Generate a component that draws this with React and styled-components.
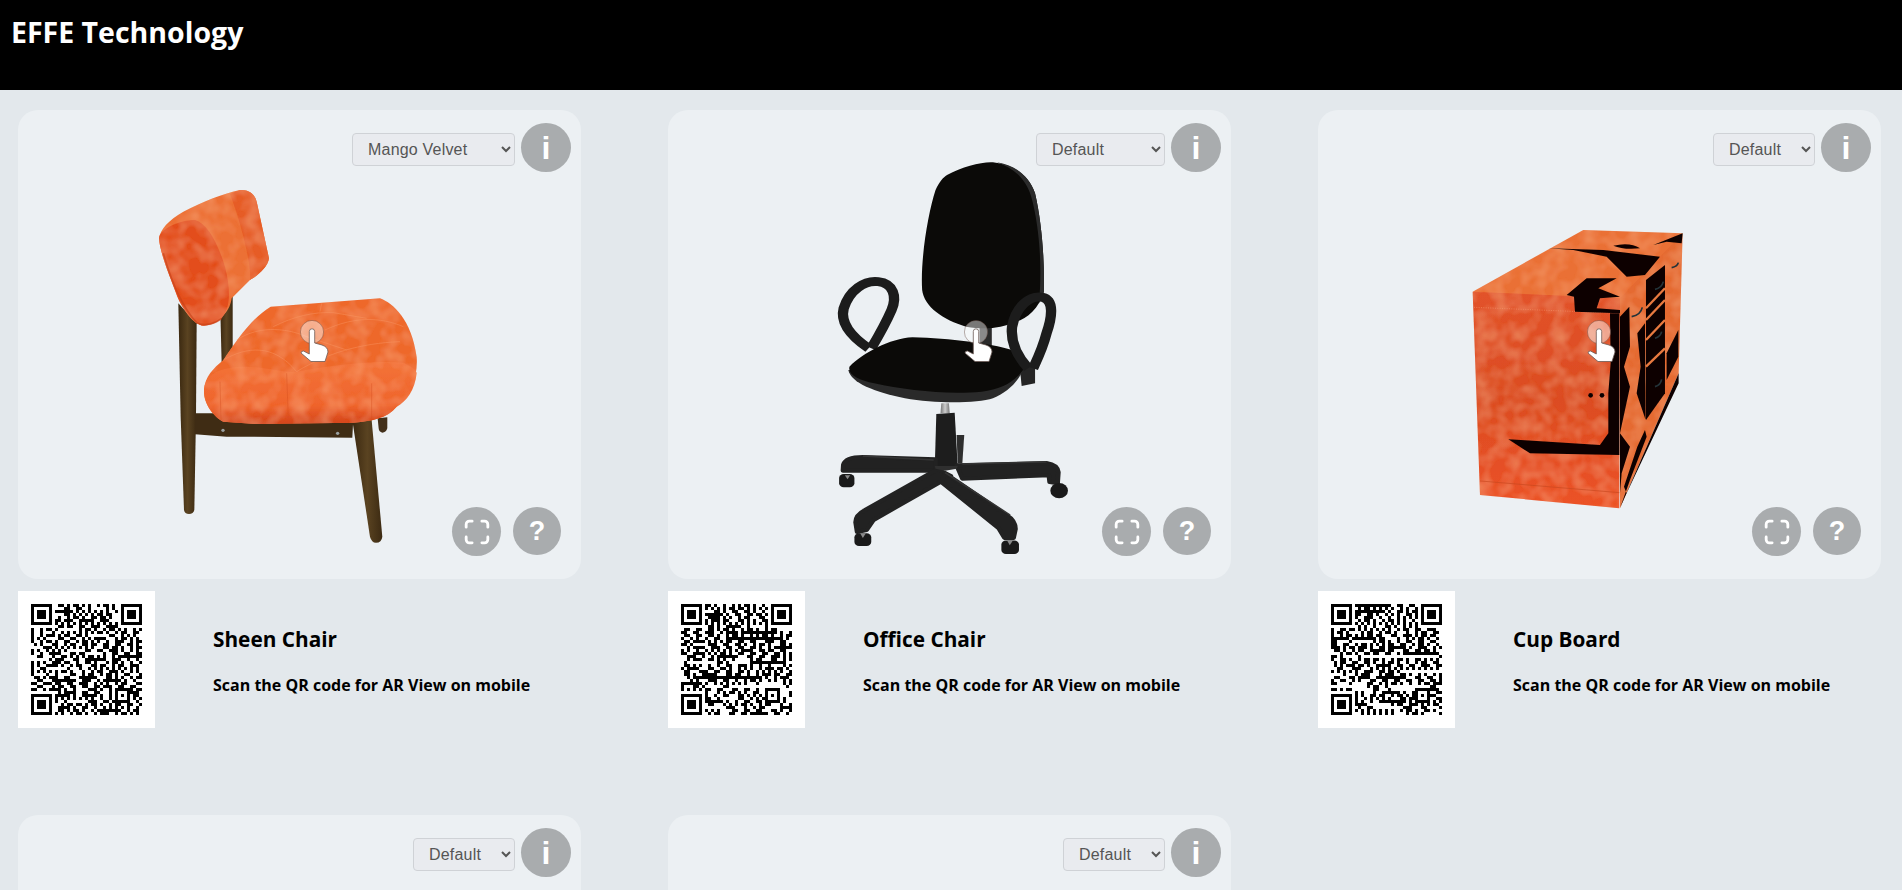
import styled, { createGlobalStyle } from 'styled-components'

const Cores = {
  preto: '#000',
  fundo: '#e3e8ec',
  card: '#ecf0f3',
  cinza: '#a9acae',
  borda: '#cfd2d6',
  select: '#e9ebef',
  texto: '#555',
}

const Global = createGlobalStyle`
  html, body { margin: 0; padding: 0; }
  body { background: ${Cores.fundo}; font-family: "Open Sans", "Noto Sans", sans-serif; }
`

const Page = styled.div`
  height: 100vh;
  overflow: hidden;
`
const Header = styled.header`
  height: 90px;
  box-sizing: border-box;
  padding: 13px 11px;
  background: ${Cores.preto};
`
const Logo = styled.h1`
  margin: 0;
  color: #fff;
  font-size: 28.5px;
  line-height: 38px;
  font-weight: 700;
`
const Grid = styled.main`
  display: grid;
  grid-template-columns: repeat(3, 563px);
  gap: 87px;
  padding: 20px 18px;
`
const Card = styled.div`
  position: relative;
  height: 469px;
  background: ${Cores.card};
  border-radius: 20px;
  overflow: hidden;
`
const Canvas = styled.svg`
  display: block;
  width: 100%;
  height: 100%;
`
const TopControls = styled.div`
  position: absolute;
  top: 13px;
  right: 10px;
  display: flex;
  align-items: flex-start;
  gap: 6px;
`
const Variant = styled.select`
  width: ${(p) => p.$width}px;
  height: 33px;
  margin-top: 10px;
  padding: 0 4px 0 11px;
  border: 1px solid ${Cores.borda};
  border-radius: 4px;
  background-color: ${Cores.select};
  color: ${Cores.texto};
  font-family: "Liberation Sans", Arial, sans-serif;
  font-size: 16px;
  letter-spacing: 0.2px;
`
const RoundButton = styled.button`
  display: flex;
  align-items: center;
  justify-content: center;
  flex: none;
  width: ${(p) => p.$size}px;
  height: ${(p) => p.$high || p.$size}px;
  padding: 0;
  border: none;
  border-radius: 50%;
  background: ${Cores.cinza};
  color: #fff;
  font-family: "Liberation Sans", Arial, sans-serif;
  font-weight: 700;
  font-size: ${(p) => p.$font}px;
  line-height: 1;
`
const BottomControls = styled.div`
  position: absolute;
  right: 20px;
  bottom: 23px;
  display: flex;
  align-items: flex-start;
  gap: 12px;
`
const Hint = styled.svg`
  position: absolute;
  top: 210px;
  left: ${(p) => p.$left}px;
  width: 29px;
  height: 42px;
`
const Info = styled.div`
  display: flex;
  align-items: center;
  margin-top: 12px;
  gap: 58px;
`
const QrBox = styled.div`
  flex: none;
  width: 137px;
  height: 137px;
  box-sizing: border-box;
  padding: 13px;
  background: #fff;
`
const QrSvg = styled.svg`
  display: block;
  width: 111px;
  height: 111px;
`
const Titulo = styled.h3`
  margin: 0 0 20px;
  color: #000;
  font-size: 20.8px;
  line-height: 30px;
  font-weight: 700;
`
const Descricao = styled.p`
  margin: 0;
  color: #000;
  font-size: 16px;
  line-height: 22px;
  font-weight: 700;
`

// fake qr, only the look of it matters
const qrPath = (seed) => {
  const n = 37
  let s = seed
  const next = () => {
    s = (s * 1103515245 + 12345) & 0x7fffffff
    return (s >> 12) & 1
  }
  const inFinder = (x, y) =>
    (x < 8 && y < 8) || (x >= n - 8 && y < 8) || (x < 8 && y >= n - 8)
  const inAlign = (x, y) => x >= 28 && x <= 32 && y >= 28 && y <= 32
  let d = ''
  for (let y = 0; y < n; y++) {
    for (let x = 0; x < n; x++) {
      const bit = next()
      if (inFinder(x, y) || inAlign(x, y)) continue
      const on = y === 6 || x === 6 ? (x + y) % 2 === 0 : bit
      if (on) d += `M${x} ${y}h1v1h-1z`
    }
  }
  const ring = (x, y, size) =>
    `M${x} ${y}h${size}v${size}h-${size}zM${x + 1} ${y + 1}v${size - 2}h${size - 2}v-${size - 2}z`
  const eye = (x, y) => ring(x, y, 7) + `M${x + 2} ${y + 2}h3v3h-3z`
  d += eye(0, 0) + eye(n - 7, 0) + eye(0, n - 7)
  d += ring(28, 28, 5) + 'M30 30h1v1h-1z'
  return d
}

const Qr = ({ seed }) => (
  <QrBox>
    <QrSvg viewBox="0 0 37 37">
      <path d={qrPath(seed)} fill="#000" fillRule="evenodd" />
    </QrSvg>
  </QrBox>
)

const Defs = () => (
  <defs>
    <filter id="velvet" x="-5%" y="-5%" width="110%" height="110%">
      <feTurbulence type="fractalNoise" baseFrequency="0.022" numOctaves="2" seed="4" />
      <feColorMatrix values="0 0 0 0 1  0 0 0 0 0.52  0 0 0 0 0.26  0 0 0 0.55 -0.2" />
      <feComposite in2="SourceAlpha" operator="in" result="n" />
      <feMerge>
        <feMergeNode in="SourceGraphic" />
        <feMergeNode in="n" />
      </feMerge>
    </filter>
    <filter id="soft" x="-5%" y="-5%" width="110%" height="110%">
      <feGaussianBlur stdDeviation="2.2" />
    </filter>
    <linearGradient id="bolster" x1="0" y1="0" x2="0" y2="1">
      <stop offset="0" stopColor="#f37238" />
      <stop offset="0.7" stopColor="#ef642c" />
      <stop offset="1" stopColor="#d4431a" />
    </linearGradient>
    <linearGradient id="wood" x1="0" y1="0" x2="1" y2="0">
      <stop offset="0" stopColor="#3a2810" />
      <stop offset="0.5" stopColor="#5a4321" />
      <stop offset="1" stopColor="#3c2a12" />
    </linearGradient>
    <linearGradient id="front" x1="0" y1="0" x2="0" y2="1">
      <stop offset="0" stopColor="#e2522a" />
      <stop offset="0.5" stopColor="#dc4c22" />
      <stop offset="1" stopColor="#ec5228" />
    </linearGradient>
    <linearGradient id="chrome" x1="0" y1="0" x2="1" y2="0">
      <stop offset="0" stopColor="#777" />
      <stop offset="0.5" stopColor="#ccc" />
      <stop offset="1" stopColor="#777" />
    </linearGradient>
  </defs>
)

const SheenChair = () => (
  <g transform="translate(122 60) scale(0.3333)">
    <path d="M713 745L742 742L742 775Q738 788 727 788Q717 786 716 775Z" fill="#43301a" />
    <path d="M240 380L278 380L278 530L245 580Z" fill="url(#wood)" />
    <path d="M115 400L170 460L168 740L163 1020Q160 1032 147 1032Q134 1032 132 1020L122 740Z" fill="url(#wood)" />
    <path d="M165 730L230 730L300 740L640 745L637 803L260 800L165 793Z" fill="#3f2c14" />
    <circle cx="249" cy="781" r="5" fill="#9aa0a0" />
    <circle cx="593" cy="790" r="5" fill="#9aa0a0" />
    <path d="M637 750L695 750L727 1100Q725 1118 708 1118Q695 1118 690 1100Z" fill="url(#wood)" />
    <g filter="url(#velvet)">
      <path d="M57 205C60 180 85 150 130 125C190 95 250 70 300 60C330 58 345 75 350 95L387 265C385 290 350 320 330 330L275 385C270 420 250 450 190 467C160 465 130 420 115 385C90 320 60 250 57 205Z" fill="#ec7034" />
      <path d="M270 72L300 60C330 58 345 75 350 95L387 265C385 290 350 320 330 330C335 280 300 150 270 72Z" fill="#e65c27" />
      <path d="M57 205C60 175 120 150 165 150C200 160 230 210 255 290C275 370 270 420 240 450C220 465 195 468 185 467C150 450 125 410 112 380C90 320 60 250 57 205Z" fill="#e34d1f" />
      <path d="M392 410L720 385C760 400 815 450 830 560C835 620 810 680 770 710C740 745 700 752 640 758L350 762L250 755C220 740 190 700 192 660C195 620 220 595 250 570C290 510 340 440 392 410Z" fill="#ee672c" />
      <path d="M192 660C195 620 225 595 300 590C380 590 430 610 470 605C560 590 680 570 790 578C815 590 830 600 830 610C825 660 800 695 770 710C740 745 700 752 640 758L350 762L250 755C220 740 190 700 192 660Z" fill="url(#bolster)" />
    </g>
    <path d="M70 250C90 320 125 410 170 458C195 470 225 462 245 445" fill="none" stroke="#c53f16" strokeWidth="5" opacity="0.6" />
    <g fill="none" stroke="#f99a6a" strokeWidth="1.6" opacity="0.75">
      <path d="M250 570C320 530 400 520 470 605" />
      <path d="M290 510C350 470 430 470 500 500L620 540" />
      <path d="M400 470C460 440 520 425 580 428L680 445" />
      <path d="M470 605C560 550 660 520 780 515" />
      <path d="M545 400L540 425M555 480C640 440 720 440 790 470" />
      <path d="M440 610L445 745M695 640L695 750M240 635L243 750" stroke="#d34d1e" />
    </g>
  </g>
)

const OfficeChair = () => (
  <g transform="translate(-8 -10) scale(0.3827 0.3333)">
    <rect x="835" y="670" width="32" height="70" fill="#2a2a2a" />
    <path d="M750 225C790 200 840 185 870 187C930 195 965 230 980 280C998 370 1005 480 1003 575C990 625 960 655 930 665C890 685 850 690 800 680C740 660 690 620 685 570C680 480 700 340 720 270C730 245 740 232 750 225Z" fill="#0b0a08" />
    <path d="M880 187C930 195 965 230 980 280C998 370 1005 480 1003 575C1000 590 995 600 990 610C1000 500 990 370 970 290C955 235 925 205 880 187Z" fill="#2b2b2b" />
    <path d="M545 745C500 710 470 670 480 625C495 570 535 540 570 545C610 550 620 590 605 630C590 670 570 710 552 745" fill="none" stroke="#1c1c1c" strokeWidth="27" />
    <path d="M940 800L980 795L980 850L945 858Z" fill="#242424" />
    <path d="M492 810C500 850 560 875 640 895C720 912 830 910 870 895C910 875 940 840 950 805Z" fill="#2a2a2a" />
    <path d="M495 800C530 760 600 715 660 712C760 715 860 730 920 750C955 770 965 790 945 815C920 850 890 868 840 875C750 885 640 870 560 850C520 840 490 825 495 800Z" fill="#0b0a08" />
    <path d="M962 805C935 770 915 730 920 680C930 620 965 585 1000 592C1030 600 1025 650 1010 700C1000 745 985 780 975 805" fill="none" stroke="#1c1c1c" strokeWidth="27" />
    <path d="M735 910L755 910L757 940L733 940Z" fill="url(#chrome)" />
    <path d="M775 1005L795 1005L790 1090L778 1090Z" fill="#2e2e2e" />
    <path d="M722 942L770 938L778 1100L718 1100Z" fill="#1d1d1d" />
    <g fill="#222" stroke="#222" strokeWidth="12" strokeLinejoin="round">
      <path d="M720 1078L530 1071Q485 1071 479 1094L478 1112L505 1112L720 1112Z" />
      <path d="M775 1096L1010 1089Q1039 1094 1041 1117L1039 1150L1018 1146L1016 1126L790 1136Z" />
      <path d="M725 1108L536 1230Q511 1245 511 1267L515 1296L540 1290L558 1260L760 1128Z" />
      <path d="M745 1120L905 1245Q929 1262 929 1287L924 1314L900 1314L885 1285L735 1146Z" />
    </g>
    <path d="M718 1098L778 1098L775 1106L745 1112L720 1106Z" fill="#2f2f2f" />
    <g fill="none" stroke="#353535" strokeWidth="4">
      <path d="M530 1068L715 1080" />
      <path d="M790 1092L1010 1086" />
      <path d="M915 1245L745 1118" />
    </g>
    <g fill="#1a1a1a">
      <rect x="468" y="1122" width="40" height="40" rx="12" />
      <circle cx="1043" cy="1172" r="23" />
      <rect x="508" y="1300" width="44" height="38" rx="12" />
      <rect x="892" y="1322" width="46" height="40" rx="12" />
    </g>
    <g fill="#8a8a8a">
      <path d="M483 1126L497 1126L490 1138Z" />
      <path d="M523 1300L538 1300L530 1314Z" />
      <path d="M907 1322L922 1322L914 1336Z" />
    </g>
  </g>
)

const CupBoard = () => (
  <g transform="translate(82 -10) scale(0.3333)">
    <g filter="url(#velvet)">
      <path d="M218 575L550 390L848 400L660 625Z" fill="#ea7036" />
      <path d="M218 575L660 595L658 1225L240 1185Z" fill="url(#front)" />
      <path d="M660 595L848 400L836 820L660 1225Z" fill="#e56a33" />
    </g>
    <path d="M222 622L660 640" stroke="#f6a27a" strokeWidth="1.5" strokeDasharray="3 4" fill="none" />
    <path d="M240 1143L658 1178" stroke="#c8481f" strokeWidth="2" fill="none" />
    <g fill="#0d0502" filter="url(#soft)">
      <path d="M445 445L610 450L780 470L735 525L680 530L620 470L520 450Z" />
      <path d="M640 437Q690 425 720 445Q670 450 640 437Z" />
      <path d="M760 435L848 400L845 430L800 425Z" />
      <path d="M500 585L560 535L650 535L595 565L660 590L600 595L590 625L660 630L660 640L525 635L522 590Z" />
      <path d="M630 640L658 640L658 1065L390 1060L325 1018L600 1035L625 1000L625 880L632 790Z" />
      <circle cx="572" cy="886" r="7" />
      <circle cx="606" cy="886" r="7" />
      <path d="M738 540L795 495L795 880L738 960Z" />
      <path d="M660 650L688 620L690 740L672 800L690 860L660 1000L690 1040L665 1120L660 1180Z" />
      <path d="M712 700L735 670L737 960L710 880L722 800Z" />
      <path d="M660 1225L836 820L836 850L680 1180L672 1160L712 1040L735 990L740 1010L690 1140Z" />
      <path d="M800 760L835 690L835 770L800 840Z" />
    </g>
    <g fill="none" stroke="#e87a40" strokeWidth="7">
      <path d="M738 625L795 565" />
      <path d="M738 660L795 600" />
      <path d="M738 720L795 660" />
      <path d="M738 800L795 745" />
    </g>
    <g fill="none" stroke="#24343a" strokeWidth="5">
      <path d="M695 650Q722 645 727 622" />
      <path d="M765 568Q785 565 790 545" />
      <path d="M815 503Q832 500 835 488" />
      <path d="M765 715Q782 710 785 695" />
      <path d="M765 860Q782 855 785 838" />
    </g>
  </g>
)

const HandHint = ({ left }) => (
  <Hint $left={left} viewBox="0 0 29 42">
    <circle cx="12" cy="12" r="11.6" fill="rgba(255,255,255,0.45)" stroke="rgba(90,60,50,0.5)" strokeWidth="0.8" />
    <path d="M9.3 11.5a2.7 2.7 0 0 1 5.4 0V23L22 25Q28 27 28 32L25 41.5H11L1 33Q1 31 3.5 31L9.3 34Z" fill="#fff" stroke="#6b5a55" strokeWidth="0.8" />
  </Hint>
)

const FullscreenIcon = () => (
  <svg width="26" height="26" viewBox="0 0 24 24" fill="none" stroke="#fff" strokeWidth="2.6" strokeLinecap="round">
    <path d="M2 7.5V5a3 3 0 0 1 3-3h2.5M16.5 2H19a3 3 0 0 1 3 3v2.5M22 16.500V19a3 3 0 0 1-3 3h-2.500M7.500 22H5a3 3 0 0 1-3-3v-2.500" />
  </svg>
)

const produtos = [
  { name: 'Sheen Chair', option: 'Mango Velvet', width: 163, hint: 282, Model: SheenChair, seed: 11 },
  { name: 'Office Chair', option: 'Default', width: 129, hint: 296, Model: OfficeChair, seed: 29 },
  { name: 'Cup Board', option: 'Default', width: 102, hint: 269, Model: CupBoard, seed: 47 },
  { option: 'Default', width: 102 },
  { option: 'Default', width: 102 },
]

const App = () => {
  return (
    <Page>
      <Global />
      <Header>
        <Logo>EFFE Technology</Logo>
      </Header>
      <Grid>
        {produtos.map((p, i) => (
          <div key={i}>
            <Card>
              <Canvas viewBox="0 0 563 469">
                <Defs />
                {p.Model && <p.Model />}
              </Canvas>
              {p.Model && <HandHint left={p.hint} />}
              <TopControls>
                <Variant $width={p.width} defaultValue={p.option}>
                  <option>{p.option}</option>
                </Variant>
                <RoundButton $size={50} $high={49} $font={32}>i</RoundButton>
              </TopControls>
              {p.Model && (
                <BottomControls>
                  <RoundButton $size={49} $font={26}><FullscreenIcon /></RoundButton>
                  <RoundButton $size={48} $font={27}>?</RoundButton>
                </BottomControls>
              )}
            </Card>
            {p.name && (
              <Info>
                <Qr seed={p.seed} />
                <div>
                  <Titulo>{p.name}</Titulo>
                  <Descricao>Scan the QR code for AR View on mobile</Descricao>
                </div>
              </Info>
            )}
          </div>
        ))}
      </Grid>
    </Page>
  )
}

export default App
